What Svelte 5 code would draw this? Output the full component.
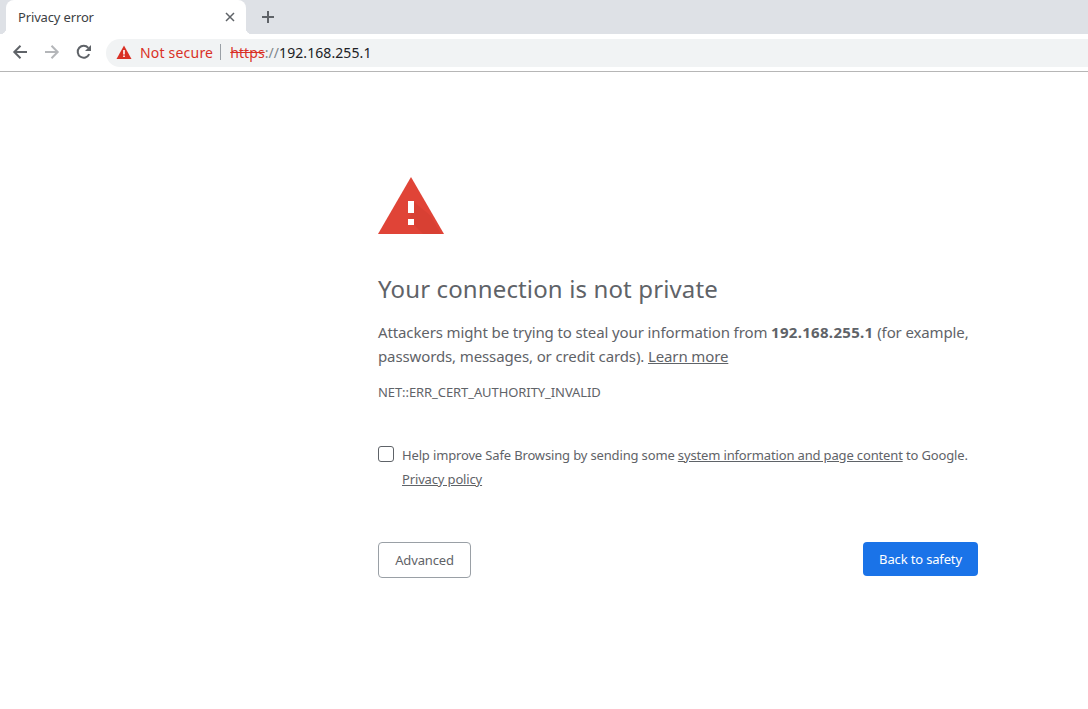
<script lang="ts">
	let report = $state(false);
	const host = '192.168.255.1';
</script>

<div class="browser">
	<div class="tabstrip">
		<div class="tab">
			<span class="tab-title">Privacy error</span>
			<svg class="tab-close" width="10" height="10" viewBox="0 0 10 10">
				<path d="M1 1l8 8M9 1l-8 8" stroke="#5f6368" stroke-width="1.5" fill="none" />
			</svg>
		</div>
		<svg class="new-tab" width="14" height="14" viewBox="0 0 14 14">
			<path d="M7 1v12M1 7h12" stroke="#5f6368" stroke-width="2" fill="none" />
		</svg>
	</div>

	<div class="toolbar">
		<svg class="nav" width="16" height="16" viewBox="0 0 16 16">
			<path d="M15 8H2.500M8.500 1.800L2.300 8l6.200 6.200" stroke="#5f6368" stroke-width="2" fill="none" />
		</svg>
		<svg class="nav" width="16" height="16" viewBox="0 0 16 16">
			<path d="M1 8h12.500M7.500 1.800L13.700 8l-6.200 6.200" stroke="#b4b6b9" stroke-width="2" fill="none" />
		</svg>
		<svg class="nav" width="16" height="16" viewBox="0 0 16 16">
			<path d="M13.200 10.200A6 6 0 1 1 12.300 3.800" stroke="#5f6368" stroke-width="2" fill="none" />
			<path d="M15 1v6H9z" fill="#5f6368" />
		</svg>
		<div class="omnibox">
			<svg width="16" height="14" viewBox="0 0 16 14">
				<path d="M8 0.500L15.500 14H0.500z" fill="#d93025" />
				<path d="M7.200 5h1.600v4.400H7.200zM7.200 10.400h1.600V12H7.200z" fill="#fff" />
			</svg>
			<span class="not-secure">Not secure</span>
			<span class="divider"></span>
			<span class="url"><span class="scheme"><s>https</s><span class="slashes">://</span></span>{host}</span>
		</div>
	</div>

	<main class="page">
		<div class="interstitial">
			<svg class="warning" width="66" height="57" viewBox="0 0 66 57">
				<path d="M33 0L66 57H0z" fill="#e04437" />
				<path d="M36 25L52.500 38.500 63 57H45L30 42V48z" fill="#c9392e" opacity="0.35" />
				<rect x="30" y="24" width="6" height="12" fill="#fff" />
				<rect x="30" y="42" width="6" height="6" fill="#fff" />
			</svg>

			<h1>Your connection is not private</h1>
			<p class="message">
				Attackers might be trying to steal your information from <strong>{host}</strong> (for example, passwords, messages, or credit cards). <a href="#learn">Learn more</a>
			</p>
			<div class="error-code">NET::ERR_CERT_AUTHORITY_INVALID</div>

			<div class="opt-in">
				<input type="checkbox" bind:checked={report} />
				<div class="opt-in-text">
					Help improve Safe Browsing by sending some <a href="#info">system information and page content</a> to Google. <a href="#policy">Privacy policy</a>
				</div>
			</div>

			<div class="actions">
				<button class="btn-advanced">Advanced</button>
				<button class="btn-safety">Back to safety</button>
			</div>
		</div>
	</main>
</div>

<style>
	:global(body) {
		margin: 0;
		background: #fff;
	}
	.browser {
		height: 709px;
		overflow: hidden;
		font-family: "Noto Sans", "Open Sans", sans-serif;
		color: #5f6368;
	}
	.tabstrip {
		height: 34px;
		background: #dee1e6;
		display: flex;
		align-items: center;
		padding-left: 6px;
	}
	.tab {
		position: relative;
		width: 240px;
		height: 34px;
		box-sizing: border-box;
		background: #fff;
		border-radius: 8px 8px 0 0;
		display: flex;
		align-items: center;
		justify-content: space-between;
		padding: 0 11px 0 12px;
	}
	/* concave corners where the tab meets the toolbar */
	.tab::before,
	.tab::after {
		content: "";
		position: absolute;
		bottom: 0;
		width: 6px;
		height: 6px;
	}
	.tab::before {
		left: -6px;
		background: radial-gradient(circle at 0 0, transparent 6px, #fff 6.500px);
	}
	.tab::after {
		right: -6px;
		background: radial-gradient(circle at 100% 0, transparent 6px, #fff 6.500px);
	}
	.tab-title {
		font-size: 13px;
		letter-spacing: -0.15px;
		color: #3c4043;
	}
	.new-tab {
		margin-left: 15px;
	}
	.toolbar {
		height: 38px;
		box-sizing: border-box;
		border-bottom: 1px solid #b6b6b6;
		display: flex;
		align-items: center;
		padding: 1px 0 0 12px;
		gap: 16px;
	}
	.nav {
		flex: none;
		margin-bottom: 2px;
	}
	.omnibox {
		flex: 1;
		height: 28px;
		box-sizing: border-box;
		margin-left: -2px;
		border-radius: 14px 0 0 14px;
		background: #f1f3f4;
		display: flex;
		align-items: center;
		padding: 0 0 2px 10px;
		font-size: 14px;
	}
	.not-secure {
		color: #d93025;
		margin-left: 8px;
		letter-spacing: 0.2px;
	}
	.divider {
		width: 1px;
		height: 16px;
		background: #9aa0a6;
		margin: 0 9px 0 7px;
	}
	.url {
		color: #202124;
		letter-spacing: 0.08px;
	}
	.scheme {
		color: #80868b;
	}
	.scheme s {
		color: #d93025;
	}
	.page {
		display: flex;
		justify-content: flex-start;
		padding: 105px 0 0 378px;
	}
	.interstitial {
		width: 600px;
		font-size: 15px;
		line-height: 24px;
	}
	.warning {
		display: block;
	}
	h1 {
		margin: 37px 0 0;
		font-size: 24px;
		font-weight: 400;
		letter-spacing: 0.13px;
		line-height: 36px;
		color: #5f6368;
	}
	.message {
		margin: 13px 0 0;
		letter-spacing: -0.12px;
	}
	.message strong {
		font-weight: 700;
		letter-spacing: 0.3px;
	}
	a {
		color: inherit;
		text-decoration: underline;
	}
	.error-code {
		margin-top: 12px;
		font-size: 13px;
		letter-spacing: -0.08px;
		line-height: 24px;
		color: #5f6368;
	}
	.opt-in {
		margin-top: 39px;
		display: flex;
		font-size: 13px;
		letter-spacing: -0.15px;
		line-height: 24px;
	}
	.opt-in input {
		appearance: none;
		flex: none;
		width: 16px;
		height: 16px;
		margin: 3px 8px 0 0;
		border: 1px solid #5f6368;
		border-radius: 3px;
		background: #fff;
	}
	.actions {
		margin-top: 51px;
		display: flex;
		justify-content: space-between;
		align-items: flex-start;
	}
	button {
		font-family: inherit;
		font-size: 13px;
		letter-spacing: -0.15px;
		line-height: 16px;
		border-radius: 4px;
		cursor: pointer;
	}
	.btn-advanced {
		width: 93px;
		height: 36px;
		background: #fff;
		color: #5f6368;
		border: 1px solid #9aa0a6;
		padding: 0;
	}
	.btn-safety {
		width: 115px;
		height: 34px;
		background: #1a73e8;
		color: #fff;
		border: none;
		padding: 0;
	}
</style>
